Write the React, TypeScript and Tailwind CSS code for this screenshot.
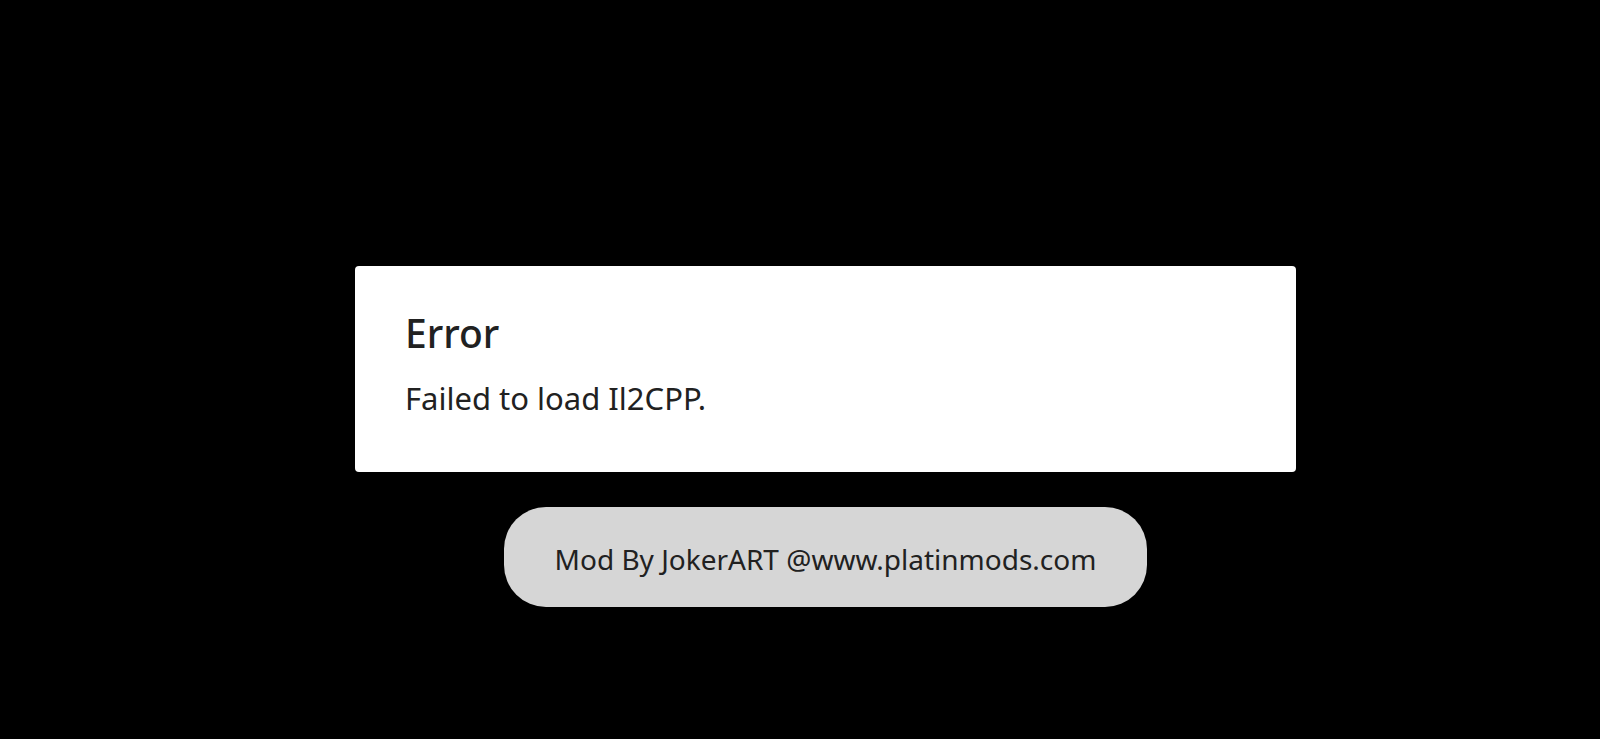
export default function App() {
  return (
    <div
      className="w-[1600px] h-[739px] bg-black flex flex-col items-center pt-[266px] pl-[51px] overflow-hidden"
      style={{ fontFamily: '"Noto Sans", "Open Sans", sans-serif' }}
    >
      <div className="w-[941px] h-[206px] bg-white rounded-[4px] px-[50px] pt-[43px] text-[#212121]">
        <div className="text-[39px] leading-[48px] font-medium">Error</div>
        <div className="mt-[21px] text-[31px] leading-[40px]">Failed to load Il2CPP.</div>
      </div>
      <div className="mt-[35px] w-[643px] h-[100px] rounded-[42px] bg-[#d6d6d6] flex items-center justify-center pt-[3px] text-[28px] text-[#212121]">
        Mod By JokerART @www.platinmods.com
      </div>
    </div>
  );
}
